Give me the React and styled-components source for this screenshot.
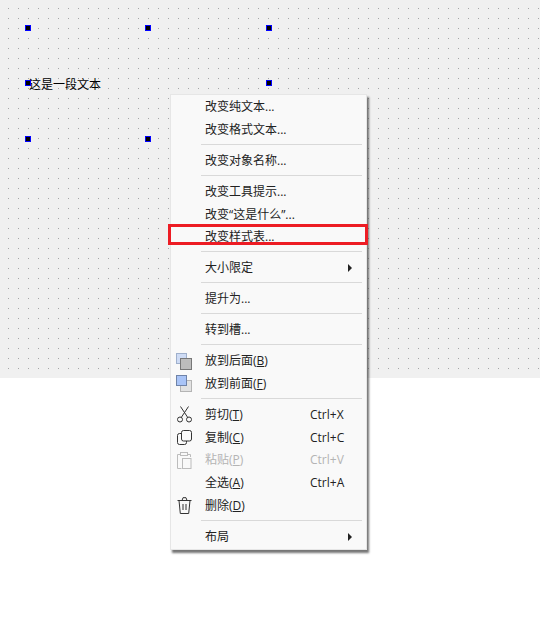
import React from 'react';
import styled, {createGlobalStyle} from 'styled-components';

const GlobalStyle = createGlobalStyle`
    html, body {
        margin: 0;
        padding: 0;
        background: #ffffff;
    }
    body {
        font-family: "Open Sans", "Noto Sans CJK SC", sans-serif;
        font-size: 12px;
        color: #222;
    }
`

const Page = styled.div`
    position: relative;
    width: 540px;
    height: 618px;
    overflow: hidden;
`
const Canvas = styled.div`
    position: relative;
    height: 378px;
    background-color: #f0f0f0;
    background-image: radial-gradient(circle at 0.5px 0.5px, #a6a6a6 0.7px, transparent 0.7px);
    background-size: 10px 10px;
    background-position: 8px 8px;
`
const Handle = styled.div`
    position: absolute;
    left: ${props => props.x}px;
    top: ${props => props.y}px;
    width: 4px;
    height: 4px;
    border: 1px solid #0000ff;
    background: #000;
`
const Label = styled.div`
    position: absolute;
    left: 29px;
    top: 75px;
    line-height: 18px;
    color: #000;
    font-family: "Noto Sans CJK SC", sans-serif;
    white-space: nowrap;
`
const Menu = styled.div`
    position: absolute;
    left: 170px;
    top: 94px;
    width: 197px;
    box-sizing: border-box;
    padding: 1px 0 1px;
    background: #f9f9f9;
    border: 1px solid #e6e6e6;
    box-shadow: 2px 3px 2px rgba(60, 60, 60, 0.7);
    display: flex;
    flex-direction: column;
`
const Row = styled.div`
    height: 22.7px;
    display: grid;
    grid-template-columns: 34px 105px 1fr;
    align-items: center;
    color: ${props => props.disabled ? '#b4b4b4' : '#222'};
    white-space: nowrap;
`
const IconSlot = styled.div`
    display: flex;
    align-items: center;
    justify-content: center;
    width: 26px;
    height: 22px;
`
const ItemText = styled.div`
    line-height: 22px;
`
const Mnemonic = styled.span`
    text-decoration: underline;
    text-underline-offset: 1px;
`
const Shortcut = styled.div`
    line-height: 22px;
`
const Arrow = styled.div`
    justify-self: end;
    margin-right: 14px;
    width: 0;
    height: 0;
    border-left: 4px solid #222;
    border-top: 4px solid transparent;
    border-bottom: 4px solid transparent;
`
const Separator = styled.div`
    height: 1px;
    margin: 2.6px 4px 4.7px 30px;
    background: #d9d9d9;
`
const Highlight = styled.div`
    position: absolute;
    left: 168px;
    top: 224px;
    width: 194px;
    height: 15px;
    border: 3px solid #ed1c24;
`

function BackIcon() {
    return (
        <svg width="17" height="17" viewBox="0 0 17 17">
            <rect x="0.5" y="0.5" width="10" height="10" fill="#cfdcf5" stroke="#9fb0cc"/>
            <rect x="4.5" y="5.5" width="11" height="11" fill="#bdbdbd" stroke="#777"/>
        </svg>
    )
}

function FrontIcon() {
    return (
        <svg width="17" height="17" viewBox="0 0 17 17">
            <rect x="4.5" y="5.5" width="11" height="11" fill="#e2e2e2" stroke="#b4b4b4"/>
            <rect x="0.5" y="0.5" width="10" height="10" fill="#a9c4f7" stroke="#6f83a8"/>
        </svg>
    )
}

function CutIcon() {
    return (
        <svg width="15" height="17" viewBox="0 0 15 17" fill="none" stroke="#333" strokeWidth="1">
            <circle cx="3" cy="13.5" r="2.5"/>
            <circle cx="12" cy="13.5" r="2.5"/>
            <path d="M4.3 11.4L11.5 0.5M10.7 11.4L3.5 0.5"/>
        </svg>
    )
}

function CopyIcon() {
    return (
        <svg width="15" height="15" viewBox="0 0 15 15" fill="none" stroke="#333" strokeWidth="1">
            <rect x="4.5" y="0.5" width="10" height="10.5" rx="2"/>
            <path d="M4.5 3.5H2.5A2 2 0 0 0 0.5 5.5V12.5A2 2 0 0 0 2.5 14.5H7.5A2 2 0 0 0 9.5 12.5V11"/>
        </svg>
    )
}

function PasteIcon() {
    return (
        <svg width="15" height="17" viewBox="0 0 15 17" fill="none" stroke="#bcbcbc" strokeWidth="1">
            <path d="M3.5 2.5H0.5V16.5H4.5M10.5 2.5H13.5V5"/>
            <rect x="3.5" y="0.5" width="7" height="3"/>
            <rect x="5.5" y="6.5" width="8.5" height="10"/>
        </svg>
    )
}

function TrashIcon() {
    return (
        <svg width="15" height="17" viewBox="0 0 15 17" fill="none" stroke="#333" strokeWidth="1">
            <path d="M0.5 3.5H14.5M5 3.5L6 0.7H9L10 3.5"/>
            <path d="M2 3.5L3.3 16.5H11.7L13 3.5"/>
            <path d="M6 7V13M9 7V13"/>
        </svg>
    )
}

const handles = [
    [25, 25], [145, 25], [266, 25],
    [25, 80], [266, 80],
    [25, 136], [145, 136],
];

function Item({icon, text, mnemonic, shortcut, submenu, disabled}) {
    return (
        <Row disabled={disabled}>
            <IconSlot>{icon}</IconSlot>
            <ItemText>
                {text}
                {mnemonic && <>(<Mnemonic>{mnemonic}</Mnemonic>)</>}
            </ItemText>
            {shortcut && <Shortcut>{shortcut}</Shortcut>}
            {submenu && <Arrow/>}
        </Row>
    )
}

export default function App() {
    return (
        <Page>
            <GlobalStyle/>
            <Canvas>
                <Label>这是一段文本</Label>
                {handles.map(([x, y]) => <Handle key={x + '-' + y} x={x} y={y}/>)}
            </Canvas>
            <Menu>
                <Item text="改变纯文本..."/>
                <Item text="改变格式文本..."/>
                <Separator/>
                <Item text="改变对象名称..."/>
                <Separator/>
                <Item text="改变工具提示..."/>
                <Item text="改变“这是什么”..."/>
                <Item text="改变样式表..."/>
                <Separator/>
                <Item text="大小限定" submenu/>
                <Separator/>
                <Item text="提升为..."/>
                <Separator/>
                <Item text="转到槽..."/>
                <Separator/>
                <Item icon={<BackIcon/>} text="放到后面" mnemonic="B"/>
                <Item icon={<FrontIcon/>} text="放到前面" mnemonic="F"/>
                <Separator/>
                <Item icon={<CutIcon/>} text="剪切" mnemonic="T" shortcut="Ctrl+X"/>
                <Item icon={<CopyIcon/>} text="复制" mnemonic="C" shortcut="Ctrl+C"/>
                <Item icon={<PasteIcon/>} text="粘贴" mnemonic="P" shortcut="Ctrl+V" disabled/>
                <Item text="全选" mnemonic="A" shortcut="Ctrl+A"/>
                <Item icon={<TrashIcon/>} text="删除" mnemonic="D"/>
                <Separator/>
                <Item text="布局" submenu/>
            </Menu>
            <Highlight/>
        </Page>
    )
}
